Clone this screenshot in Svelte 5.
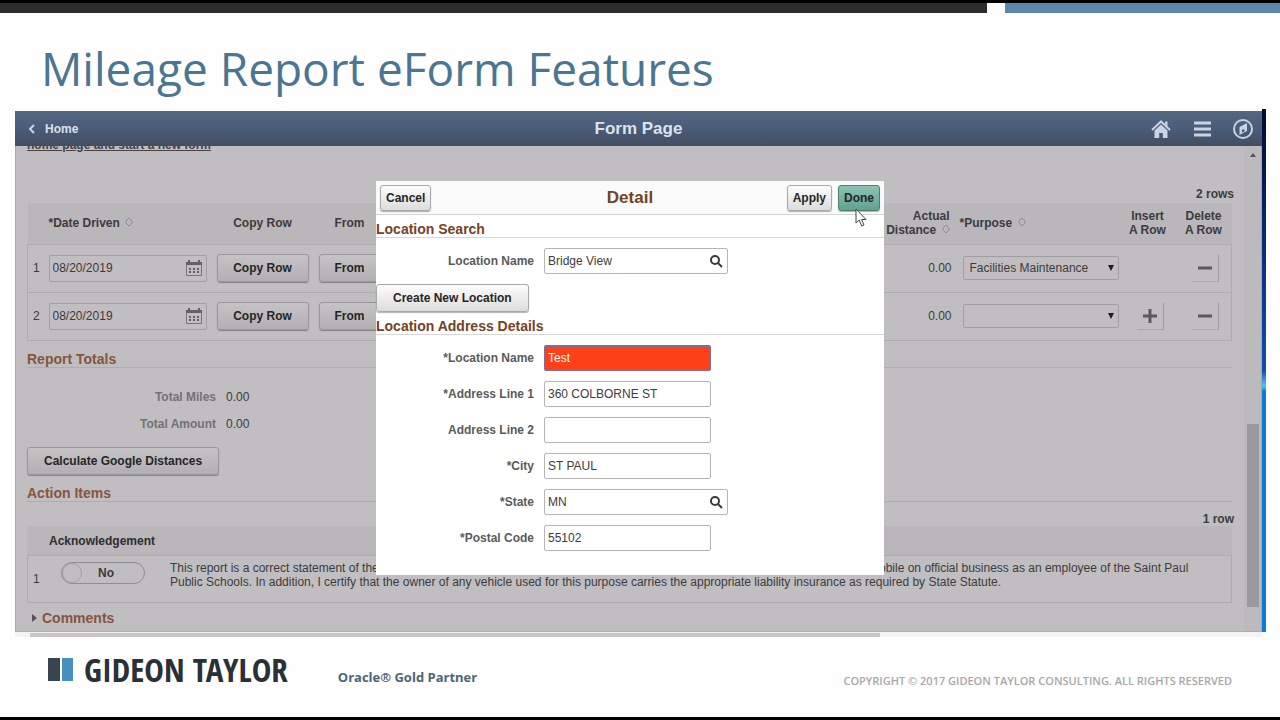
<script lang="ts">
	interface MileageRow {
		id: number;
		date: string;
		distance: string;
		purpose: string;
		canInsert: boolean;
	}

	interface AddressField {
		id: string;
		label: string;
		value: string;
		lookup?: boolean;
		invalid?: boolean;
	}

	const PURPOSES = ['', 'Facilities Maintenance', 'Professional Development', 'Home Visit'];

	let rows: MileageRow[] = $state([
		{
			id: 1,
			date: '08/20/2019',
			distance: '0.00',
			purpose: 'Facilities Maintenance',
			canInsert: false
		},
		{ id: 2, date: '08/20/2019', distance: '0.00', purpose: '', canInsert: true }
	]);

	let search = $state('Bridge View');

	let fields: AddressField[] = $state([
		{ id: 'name', label: '*Location Name', value: 'Test', invalid: true },
		{ id: 'line1', label: '*Address Line 1', value: '360 COLBORNE ST' },
		{ id: 'line2', label: 'Address Line 2', value: '' },
		{ id: 'city', label: '*City', value: 'ST PAUL' },
		{ id: 'state', label: '*State', value: 'MN', lookup: true },
		{ id: 'postal', label: '*Postal Code', value: '55102' }
	]);

	let acknowledged = $state(false);
</script>

{#snippet sortIcon()}
	<svg class="sort" viewBox="0 0 8 10" width="8" height="10" aria-hidden="true">
		<path d="M1 4 4 1l3 3M1 6l3 3 3-3M1 4v2M7 4v2" />
	</svg>
{/snippet}

{#snippet lookupButton(label: string)}
	<button class="lookup" aria-label={label}>
		<svg viewBox="0 0 14 14" width="14" height="14" aria-hidden="true">
			<circle cx="6" cy="6" r="4" />
			<path d="m9 9 4 4" />
		</svg>
	</button>
{/snippet}

<div class="slide">
	<div class="topbar">
		<span class="dark"></span>
		<span class="blue"></span>
	</div>

	<h1>Mileage Report eForm Features</h1>

	<div class="capture">
		<div class="app">
			<header class="banner">
				<a class="home" href="#home">
					<svg viewBox="0 0 6 10" width="6" height="10" aria-hidden="true">
						<path d="M5 1 1 5l4 4" />
					</svg>
					Home
				</a>
				<h2>Form Page</h2>
				<nav>
					<button aria-label="Home">
						<svg viewBox="0 0 20 20" width="20" height="20" aria-hidden="true">
							<path class="fill" d="M10 5.5 3.5 11.5V19h4.7v-5h3.6v5h4.7v-7.500z" />
							<path d="M1 11 10 2.500l9 8.500" stroke-width="2" />
							<path class="fill" d="M14 2.500h2.500v5L14 5z" />
						</svg>
					</button>
					<button aria-label="Actions">
						<svg viewBox="0 0 20 20" width="20" height="20" aria-hidden="true">
							<path d="M2 4h17M2 10h17M2 16h17" stroke-width="3" />
						</svg>
					</button>
					<button aria-label="Navigator">
						<svg viewBox="0 0 20 20" width="20" height="20" aria-hidden="true">
							<circle cx="10" cy="10" r="9" stroke-width="2" />
							<path class="fill" d="M14 4v8l-7.500 4V8z" />
							<path class="hole" d="M9 10.500h2.500v2L9 13.500z" />
						</svg>
					</button>
				</nav>
			</header>

			<div class="viewport">
				<main>
					<a class="intro" href="#new">home page and start a new form</a>

					<div class="count">2 rows</div>
					<table class="mileage">
						<colgroup>
							<col class="c-num" />
							<col class="c-date" />
							<col class="c-copy" />
							<col class="c-from" />
							<col />
							<col class="c-dist" />
							<col class="c-purpose" />
							<col class="c-act" />
							<col class="c-act" />
						</colgroup>
						<thead>
							<tr>
								<td></td>
								<th class="left">*Date Driven {@render sortIcon()}</th>
								<th>Copy Row</th>
								<th>From</th>
								<td></td>
								<th class="right">Actual <br />Distance {@render sortIcon()}</th>
								<th class="left">*Purpose {@render sortIcon()}</th>
								<th>Insert<br />A Row</th>
								<th>Delete<br />A Row</th>
							</tr>
						</thead>
						<tbody>
							{#each rows as row (row.id)}
								<tr>
									<td class="num">{row.id}</td>
									<td>
										<div class="date">
											<input aria-label="Date driven, row {row.id}" bind:value={row.date} />
											<button aria-label="Pick date, row {row.id}">
												<svg viewBox="0 0 18 18" width="18" height="18" aria-hidden="true">
													<path d="M1.500 3.500h15v13h-15z" />
													<path class="solid" d="M1 3h16v3H1zM3 1h2v3H3zM13 1h2v3h-2z" />
													<path
														class="solid"
														d="M4 9h2v2H4zM8 9h2v2H8zM12 9h2v2h-2zM4 12h2v2H4zM8 12h2v2H8zM12 12h2v2h-2z"
													/>
												</svg>
											</button>
										</div>
									</td>
									<td><button class="btn large wide">Copy Row</button></td>
									<td><button class="btn large wide">From</button></td>
									<td></td>
									<td class="amount">{row.distance}</td>
									<td class="reason">
										<div class="purpose">
											<select aria-label="Purpose, row {row.id}" bind:value={row.purpose}>
												{#each PURPOSES as purpose (purpose)}
													<option value={purpose}>{purpose}</option>
												{/each}
											</select>
											<svg viewBox="0 0 6 6" width="6" height="6" aria-hidden="true">
												<path d="M0 0h6L3 6z" />
											</svg>
										</div>
									</td>
									<td class="act">
										{#if row.canInsert}
											<button class="square" aria-label="Insert a row">
												<svg viewBox="0 0 14 14" width="14" height="14" aria-hidden="true">
													<path d="M0 7h14M7 0v14" />
												</svg>
											</button>
										{/if}
									</td>
									<td class="act">
										<button class="square" aria-label="Delete row {row.id}">
											<svg viewBox="0 0 14 14" width="14" height="14" aria-hidden="true">
												<path d="M0 7h14" />
											</svg>
										</button>
									</td>
								</tr>
							{/each}
						</tbody>
					</table>

					<h3>Report Totals</h3>
					<dl class="totals">
						<dt>Total Miles</dt>
						<dd>0.00</dd>
						<dt>Total Amount</dt>
						<dd>0.00</dd>
					</dl>
					<button class="btn large calculate">Calculate Google Distances</button>

					<h3>Action Items</h3>
					<div class="count">1 row</div>
					<div class="ack-head">Acknowledgement</div>
					<div class="ack">
						<span>1</span>
						<label class="toggle">
							<input type="checkbox" role="switch" bind:checked={acknowledged} />
							<span>{acknowledged ? 'Yes' : 'No'}</span>
						</label>
						<p>
							This report is a correct statement of the mileage driven and of all the expenses directly
							incurred by me while using my personal automobile on official business as an employee of the
							Saint Paul<br />
							Public Schools. In addition, I certify that the owner of any vehicle used for this purpose
							carries the appropriate liability insurance as required by State Statute.
						</p>
					</div>
					<button class="comments">
						<svg viewBox="0 0 5 8" width="5" height="8" aria-hidden="true">
							<path d="M0 0v8l5-4z" />
						</svg>
						Comments
					</button>

					<section class="modal" role="dialog" aria-labelledby="detail-title">
						<header>
							<button class="btn">Cancel</button>
							<h2 id="detail-title">Detail</h2>
							<div class="actions">
								<button class="btn">Apply</button>
								<button class="btn done">Done</button>
							</div>
						</header>

						<h3>Location Search</h3>
						<div class="fields">
							<label for="search">Location Name</label>
							<div class="box has-lookup">
								<input id="search" bind:value={search} />
								{@render lookupButton('Look up location')}
							</div>
						</div>
						<button class="btn large create">Create New Location</button>

						<h3>Location Address Details</h3>
						<div class="fields">
							{#each fields as field (field.id)}
								<label for={field.id}>{field.label}</label>
								<div class="box" class:has-lookup={field.lookup} class:invalid={field.invalid}>
									<input id={field.id} bind:value={field.value} />
									{#if field.lookup}
										{@render lookupButton('Look up state')}
									{/if}
								</div>
							{/each}
						</div>

						<svg class="pointer" viewBox="0 0 12 19" width="12" height="19" aria-hidden="true">
							<path d="M1 1v14l3.200-3 2.500 6 2.300-1-2.500-5.500H11z" />
						</svg>
					</section>
				</main>

				<div class="scrollbar" aria-hidden="true">
					<svg viewBox="0 0 6 4" width="6" height="4"><path d="M0 4 3 0l3 4z" /></svg>
					<span class="thumb"></span>
				</div>
			</div>
		</div>
		<div class="desktop-edge"></div>
	</div>
	<div class="hscroll"><span></span></div>

	<footer>
		<div class="brand">
			<svg viewBox="0 0 25 23" width="25" height="23" aria-hidden="true">
				<path d="M0 0h12v23H0z" fill="#3a4350" />
				<path d="M14 0h11v23H14z" fill="#468fc1" />
			</svg>
			GIDEON TAYLOR
		</div>
		<div class="partner">Oracle® Gold Partner</div>
		<small>COPYRIGHT © 2017 GIDEON TAYLOR CONSULTING. ALL RIGHTS RESERVED</small>
	</footer>
</div>

<style>
	:global(body) {
		background: #fefefe;
	}

	.slide {
		display: flex;
		flex-direction: column;
		box-sizing: border-box;
		min-height: 100vh;
		border-top: 3px solid #000;
		border-bottom: 3px solid #000;
		background: #fefefe;
		color: #3c3b3d;
		font: 12px/14px 'Liberation Sans', Arial, sans-serif;
	}

	.slide * {
		box-sizing: border-box;
	}

	button,
	input,
	select {
		margin: 0;
		font: inherit;
		color: inherit;
	}

	.topbar {
		display: grid;
		grid-template-columns: 987fr 275fr;
		gap: 18px;
		height: 10px;
	}

	.topbar .dark {
		background: #2c2c2c;
	}

	.topbar .blue {
		background: #5c86ad;
	}

	h1 {
		margin: 0;
		padding: 23px 41px 9px;
		color: #4c7592;
		font: 400 46px/64px 'Open Sans', 'Noto Sans', sans-serif;
	}

	.capture {
		display: flex;
		margin: 0 14px 0 15px;
	}

	.app {
		flex: 1;
		min-width: 0;
		margin-top: 2px;
	}

	.desktop-edge {
		width: 4px;
		background: linear-gradient(
			#020a30,
			#03256f 20%,
			#0d4fb4 50%,
			#57c4f2 53%,
			#0a7cd8 54%,
			#0a7cd8
		);
	}

	.banner {
		display: grid;
		grid-template-columns: 1fr auto 1fr;
		align-items: center;
		height: 35px;
		padding: 0 9px;
		background: linear-gradient(#54677f, #4b5f7d 40%, #434e60);
		color: #dbe2ea;
	}

	.banner h2 {
		margin: 0;
		font-size: 17px;
		line-height: 20px;
	}

	.banner svg {
		display: block;
		fill: none;
		stroke: #c8d3e3;
		stroke-width: 2;
	}

	.banner .fill {
		fill: #c8d3e3;
		stroke: none;
	}

	.banner .hole {
		fill: #4b5a70;
		stroke: none;
	}

	.home {
		display: flex;
		align-items: center;
		gap: 10px;
		padding-left: 5px;
		color: inherit;
		font-weight: bold;
		text-decoration: none;
	}

	nav {
		display: flex;
		justify-content: flex-end;
		gap: 21px;
	}

	nav button,
	.lookup,
	.date button {
		padding: 0;
		border: 0;
		background: none;
	}

	.viewport {
		display: flex;
		border-left: 1px solid #aaa9ab;
		border-bottom: 1px solid #adabad;
		background: #c0bec0;
	}

	main {
		position: relative;
		flex: 1;
		min-width: 0;
		padding: 0 12px 5px 11px;
		overflow: hidden;
	}

	.intro {
		display: block;
		margin-top: -8px;
		color: #454248;
		font-weight: bold;
	}

	.count {
		margin-right: -2px;
		font-weight: bold;
		text-align: right;
	}

	.intro + .count {
		margin-top: 35px;
	}

	table {
		width: 100%;
		margin-top: 2px;
		table-layout: fixed;
		border-collapse: collapse;
	}

	.c-num {
		width: 16px;
	}

	.c-date {
		width: 168px;
	}

	.c-copy {
		width: 102px;
	}

	.c-from {
		width: 72px;
	}

	.c-dist {
		width: 84px;
	}

	.c-purpose {
		width: 165px;
	}

	.c-act {
		width: 56px;
	}

	thead {
		background: #b9b7b9;
	}

	thead tr {
		height: 41px;
	}

	tbody tr {
		height: 48px;
		border: 1px solid #aeacae;
	}

	th,
	td {
		padding: 0 5px;
	}

	th {
		text-align: center;
	}

	.left {
		text-align: left;
	}

	.right {
		text-align: right;
	}

	.sort {
		margin-left: 2px;
		fill: none;
		stroke: #8c8a8c;
	}

	.num {
		vertical-align: middle;
	}

	.date {
		display: flex;
		align-items: center;
		height: 27px;
		padding-right: 3px;
		border: 1px solid #a3a1a3;
		border-radius: 2px;
	}

	.date input {
		flex: 1;
		min-width: 0;
		padding: 0 3px;
		border: 0;
		background: none;
	}

	.date svg {
		display: block;
		fill: none;
		stroke: #777579;
	}

	.date .solid {
		fill: #636164;
		stroke: none;
	}

	.btn {
		height: 26px;
		padding: 0 5px;
		border: 1px solid #a9a9a9;
		border-radius: 3px;
		background: linear-gradient(#fdfdfd, #dcdcdc);
		box-shadow: 0 1px 1px rgba(0, 0, 0, 0.3);
		color: #262626;
		font-weight: bold;
		white-space: nowrap;
	}

	.btn.large {
		height: 28px;
		padding: 0 16px;
	}

	main > .btn,
	table .btn {
		border-color: #999799;
		background: linear-gradient(#c5c3c5, #b1afb1);
	}

	.btn.wide {
		display: block;
		width: 100%;
		padding: 0;
	}

	.amount {
		padding-right: 3px;
		text-align: right;
	}

	.reason {
		padding: 0 1px 0 8px;
	}

	.purpose {
		display: grid;
		align-items: center;
	}

	.purpose select {
		grid-area: 1 / 1;
		width: 100%;
		height: 24px;
		padding: 0 6px;
		appearance: none;
		border: 1px solid #a09ea0;
		border-radius: 2px;
		background: none;
	}

	.purpose svg {
		grid-area: 1 / 1;
		justify-self: end;
		margin-right: 5px;
		fill: #1d1d1d;
		pointer-events: none;
	}

	.act {
		padding-left: 10px;
		text-align: center;
	}

	.square {
		display: inline-grid;
		place-items: center;
		width: 27px;
		height: 27px;
		padding: 0;
		border: 0;
		border-right: 1px solid #9d9b9d;
		border-bottom: 1px solid #aaa8aa;
		background: none;
	}

	.square svg {
		display: block;
		stroke: #5a585b;
		stroke-width: 3;
	}

	h3 {
		margin: 0;
		padding: 7px 0 1px;
		border-bottom: 1px solid #aeacae;
		color: #875440;
		font-size: 14px;
		line-height: 14px;
	}

	main > h3 {
		margin-top: 4px;
	}

	.totals {
		display: grid;
		grid-template-columns: 189px auto;
		gap: 13px 10px;
		margin: 22px 0 16px;
	}

	dt {
		color: #737174;
		font-weight: bold;
		text-align: right;
	}

	dd {
		margin: 0;
	}

	.calculate {
		display: block;
	}

	h3 + .count {
		margin-top: 10px;
	}

	.ack-head {
		padding: 8px 22px 7px;
		background: #b9b7b9;
		color: #2f2d30;
		font-weight: bold;
	}

	.ack {
		display: grid;
		grid-template-columns: 28px 84px auto;
		align-items: center;
		height: 48px;
		padding: 0 5px;
		border: 1px solid #aeacae;
	}

	.toggle {
		display: flex;
		align-items: center;
		align-self: start;
		height: 22px;
		margin-top: 6px;
		border: 1px solid #8f8d90;
		border-radius: 11px;
		font-weight: bold;
	}

	.toggle input {
		width: 20px;
		height: 20px;
		appearance: none;
		border: 1px solid #a19fa1;
		border-radius: 10px;
	}

	.toggle span {
		flex: 1;
		padding-right: 14px;
		text-align: center;
	}

	.ack p {
		align-self: start;
		margin: 5px 0 0 25px;
		white-space: nowrap;
	}

	.comments {
		display: flex;
		align-items: center;
		gap: 5px;
		margin-top: 7px;
		padding: 0 5px;
		border: 0;
		background: none;
		color: #875440;
		font-size: 14px;
		font-weight: bold;
		line-height: 16px;
	}

	.comments svg {
		fill: #555357;
	}

	.scrollbar {
		display: flex;
		flex-direction: column;
		align-items: center;
		width: 18px;
		padding: 7px 0 24px;
		border-right: 1px solid #83aee0;
		background: #bcbabc;
	}

	.scrollbar svg {
		fill: #555;
	}

	.thumb {
		width: 12px;
		height: 183px;
		margin-top: auto;
		background: #9b999b;
	}

	.modal {
		position: absolute;
		top: 35px;
		left: 50%;
		width: 508px;
		height: 394px;
		transform: translateX(-50%);
		background: #fff;
	}

	.modal header {
		display: grid;
		grid-template-columns: 1fr auto 1fr;
		align-items: center;
		height: 34px;
		padding: 0 4px;
		border-bottom: 1px solid #d4d4d4;
		background: #fafafa;
	}

	.modal h2 {
		margin: 0;
		color: #74431f;
		font-size: 17px;
		line-height: 20px;
	}

	.modal header > .btn {
		justify-self: start;
	}

	.actions {
		display: flex;
		justify-content: flex-end;
		gap: 6px;
	}

	.btn.done {
		border-color: #4b7f70;
		background: linear-gradient(#8cc4b3, #62a18f);
	}

	.modal h3 {
		border-color: #d9d6d4;
		color: #74431f;
	}

	.fields {
		display: grid;
		grid-template-columns: 158px auto;
		align-items: center;
		gap: 10px;
		padding: 10px 0;
	}

	.fields label {
		color: #5a5a5a;
		font-weight: bold;
		text-align: right;
	}

	.box {
		display: flex;
		align-items: center;
		width: 167px;
		height: 26px;
		border: 1px solid #b5b5b5;
		border-radius: 2px;
	}

	.box.has-lookup {
		width: 184px;
	}

	.box input {
		flex: 1;
		min-width: 0;
		height: 24px;
		padding: 0 3px;
		border: 0;
		outline: 0;
		background: none;
	}

	.box.invalid {
		border: 2px solid #8a6a90;
		background: #fc4119;
		color: #fff;
	}

	.box.invalid input {
		padding: 0 2px;
	}

	.lookup {
		width: 22px;
	}

	.lookup svg {
		display: block;
		margin: 0 auto;
		fill: none;
		stroke: #3b3b3b;
		stroke-width: 2;
	}

	.create {
		display: block;
	}

	.pointer {
		position: absolute;
		top: 27px;
		right: 17px;
		fill: #fff;
		stroke: #444;
	}

	.hscroll {
		display: flex;
		height: 5px;
		margin: 0 18px 0 15px;
		padding: 1px 0 0 15px;
		background: #f3f3f3;
	}

	.hscroll span {
		width: 69%;
		background: #c6c4c6;
	}

	footer {
		display: flex;
		flex: 1;
		align-items: center;
		padding: 0 48px 14px;
	}

	.brand {
		display: flex;
		align-items: center;
		gap: 11px;
		color: #2a3035;
		font: bold 33px/36px 'Liberation Sans Narrow', 'Open Sans Condensed', 'Liberation Sans', sans-serif;
	}

	.partner {
		margin: 14px 0 0 50px;
		color: #4b6674;
		font: bold 13px/18px 'Open Sans', sans-serif;
	}

	small {
		margin: 22px 0 0 auto;
		color: #a9a7a9;
		font: 600 11px/16px 'Open Sans', sans-serif;
	}
</style>
